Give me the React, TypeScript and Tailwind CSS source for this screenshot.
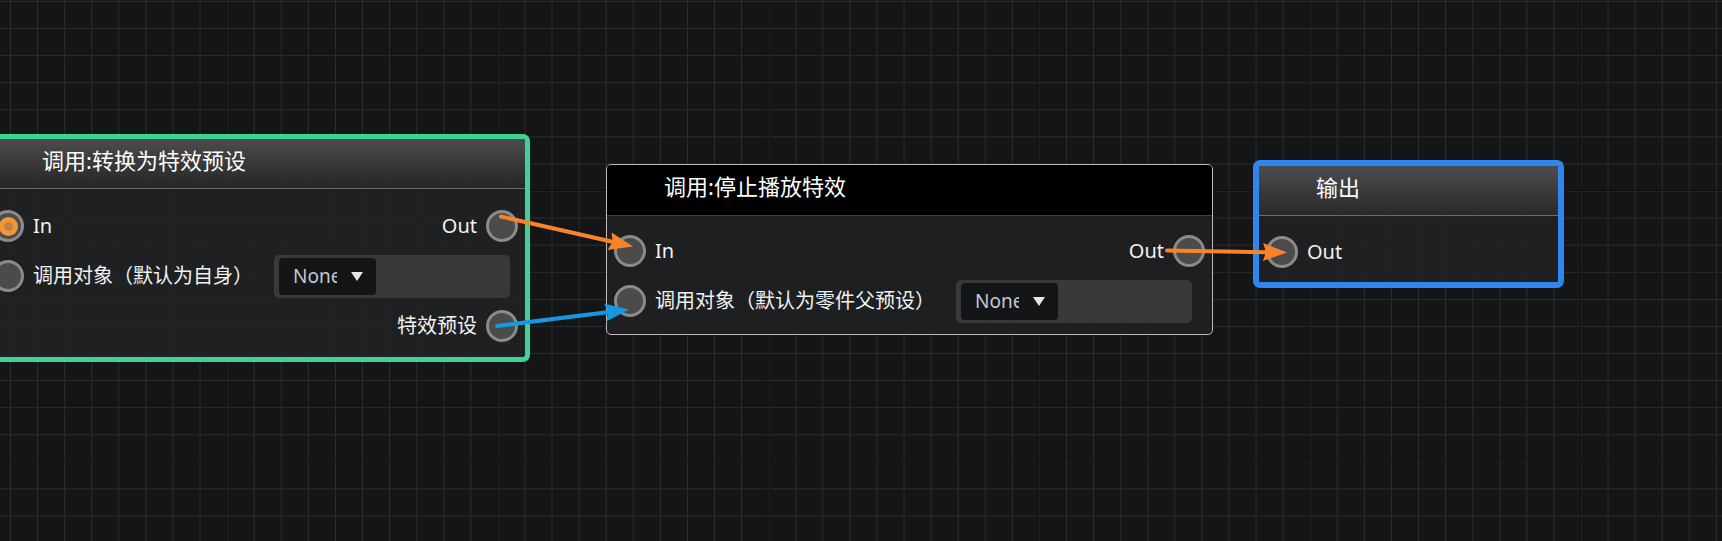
import React from 'react';

const FONT = "font-['Noto_Sans','Noto_Sans_CJK_SC',sans-serif]";

const Socket = ({ active = false }: { active?: boolean }) => (
  <div className="flex h-[32px] w-[32px] shrink-0 items-center justify-center rounded-full border-[3px] border-[#8b8b8b] bg-[#4b4b4b]">
    {active && (
      <div className="flex h-[19px] w-[19px] items-center justify-center rounded-full bg-[#f39637]">
        <div className="h-[9px] w-[9px] rounded-full bg-[#c5803f]" />
      </div>
    )}
  </div>
);

const Dropdown = () => (
  <div className="ml-3 flex h-[43px] w-[236px] items-center rounded-[5px] bg-[#393939] px-[5px]">
    <div className="flex h-[37px] w-[97px] items-center rounded-[4px] bg-[#141517] pl-[14px]">
      <span className="w-[44px] overflow-hidden whitespace-nowrap text-[19px] text-[#c3cad3]">None</span>
      <svg className="ml-[14px]" width="12" height="9" viewBox="0 0 12 9">
        <polygon points="0,0 12,0 6,9" fill="#e6e6e6" />
      </svg>
    </div>
  </div>
);

const InRow = ({ label, active, dropdown }: { label: string; active?: boolean; dropdown?: boolean }) => (
  <div className="flex h-[50px] items-center gap-[9px] px-[7px]">
    <Socket active={active} />
    <span className="whitespace-nowrap">{label}</span>
    {dropdown && <Dropdown />}
  </div>
);

const OutRow = ({ label }: { label: string }) => (
  <div className="flex h-[50px] items-center justify-end gap-[9px] px-[7px]">
    <span className="whitespace-nowrap">{label}</span>
    <Socket />
  </div>
);

const BothRow = ({ left, right, active }: { left: string; right: string; active?: boolean }) => (
  <div className="flex h-[50px] items-center justify-between px-[7px]">
    <div className="flex items-center gap-[9px]">
      <Socket active={active} />
      <span>{left}</span>
    </div>
    <div className="flex items-center gap-[9px]">
      <span>{right}</span>
      <Socket />
    </div>
  </div>
);

type Pt = [number, number];

const Arrow = ({ from, to, color }: { from: Pt; to: Pt; color: string }) => {
  const dx = to[0] - from[0];
  const dy = to[1] - from[1];
  const len = Math.hypot(dx, dy);
  const ux = dx / len;
  const uy = dy / len;
  const L = 24;
  const W = 9;
  const bx = to[0] - ux * L;
  const by = to[1] - uy * L;
  const pts = [
    `${to[0]},${to[1]}`,
    `${bx - uy * W},${by + ux * W}`,
    `${bx + ux * 3},${by + uy * 3}`,
    `${bx + uy * W},${by - ux * W}`,
  ].join(' ');
  return (
    <g>
      <line x1={from[0]} y1={from[1]} x2={bx + ux * 4} y2={by + uy * 4} stroke={color} strokeWidth={4} strokeLinecap="round" />
      <polygon points={pts} fill={color} />
    </g>
  );
};

export default function App() {
  return (
    <div
      className={`relative h-[541px] w-[1722px] overflow-hidden bg-[#141517] bg-[linear-gradient(to_right,#0e0f10_1px,transparent_1px),linear-gradient(to_bottom,#0e0f10_1px,transparent_1px),linear-gradient(to_right,#2b2c2e_1px,transparent_1px),linear-gradient(to_bottom,#2b2c2e_1px,transparent_1px)] bg-[size:270.8px_270.8px,270.8px_270.8px,27.08px_27.08px,27.08px_27.08px] bg-[position:226px_0px,0px_190px,10px_1px,10px_1px] text-[20px] text-[#f2f2f2] ${FONT}`}
    >
      {/* node: 调用:转换为特效预设 */}
      <div className="absolute left-[-20px] top-[134px] w-[550px] overflow-hidden rounded-[7px] border-[5px] border-[#3ed294] bg-[#202123]/90">
        <div className="flex h-[50px] items-center border-b border-[#6b6b6b] bg-gradient-to-b from-[#525252]/90 to-[#262626]/90 pb-[7px] pl-[57px] text-[22px] text-white">
          调用:转换为特效预设
        </div>
        <div className="pb-[6px] pt-[12px]">
          <BothRow left="In" right="Out" active />
          <InRow label="调用对象（默认为自身）" dropdown />
          <OutRow label="特效预设" />
        </div>
      </div>

      {/* node: 调用:停止播放特效 */}
      <div className="absolute left-[606px] top-[164px] w-[607px] overflow-hidden rounded-[5px] border-[1.5px] border-[#bababa] bg-[#1f2021]/95">
        <div className="flex h-[51px] items-center border-b border-[#3d3d3d] bg-black pb-[7px] pl-[57px] text-[22px] text-white">
          调用:停止播放特效
        </div>
        <div className="pb-[8px] pt-[10px]">
          <BothRow left="In" right="Out" />
          <InRow label="调用对象（默认为零件父预设）" dropdown />
        </div>
      </div>

      {/* node: 输出 */}
      <div className="absolute left-[1253px] top-[160px] w-[311px] overflow-hidden rounded-[7px] border-[6px] border-[#2f86f0] bg-[#202123]/90">
        <div className="flex h-[50px] items-center border-b border-[#6b6b6b] bg-gradient-to-b from-[#525252]/90 to-[#2a2a2a]/90 pb-[7px] pl-[57px] text-[22px] text-white">
          输出
        </div>
        <div className="pb-[5px] pt-[11px]">
          <InRow label="Out" />
        </div>
      </div>

      {/* wires */}
      <svg className="pointer-events-none absolute inset-0" width="1722" height="541">
        <Arrow from={[501, 216.5]} to={[633, 246.5]} color="#f7832b" />
        <Arrow from={[497, 326]} to={[629, 309.5]} color="#1598e2" />
        <Arrow from={[1167, 250.5]} to={[1287, 252.5]} color="#f7832b" />
      </svg>
    </div>
  );
}
